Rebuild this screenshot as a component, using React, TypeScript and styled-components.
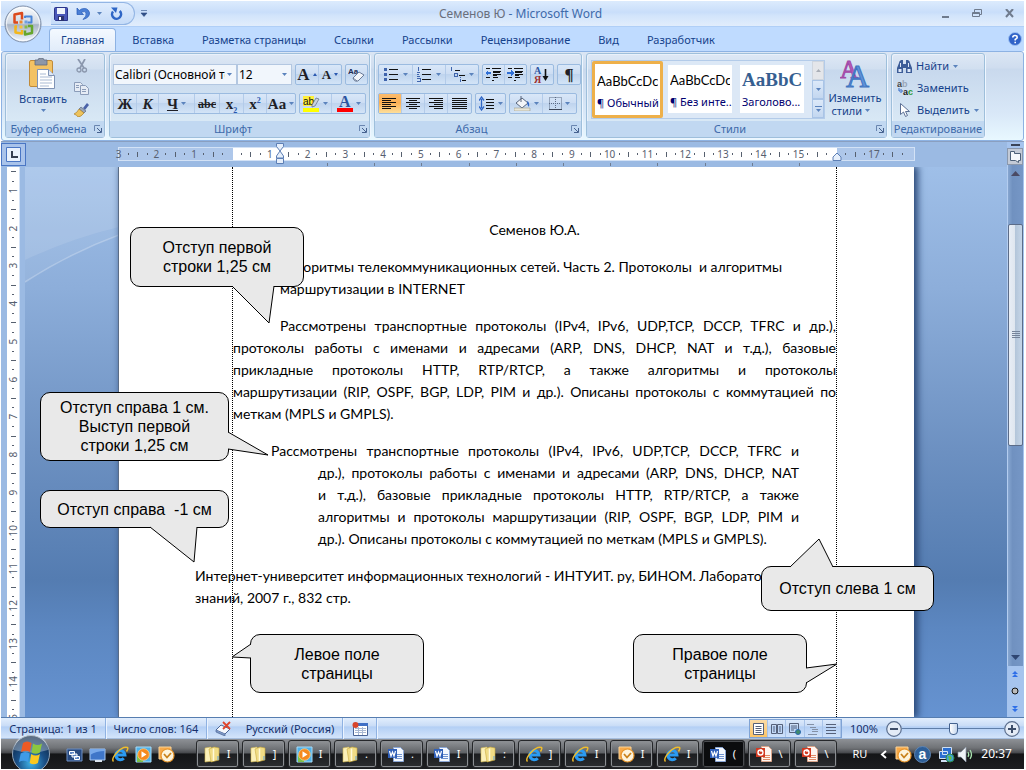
import React from "react";
import styled, { createGlobalStyle, css } from "styled-components";

const UI = '"Noto Sans", "Open Sans", sans-serif';
const INK = "#15428b";

const GlobalStyle = createGlobalStyle`
  * { box-sizing: border-box; }
  body { margin: 0; background: #fff; }
  button, select, input { font: inherit; color: inherit; margin: 0; }
  svg { display: block; }
`;

const Screen = styled.div`
  min-height: 100vh;
  padding: 1px 2px 1px 1px;
  display: flex;
  flex-direction: column;
  overflow: hidden;
  font-family: ${UI};
  font-size: 11px;
  line-height: 16px;
  color: ${INK};
`;

/* ---------- title bar ---------- */
const Head = styled.header`
  position: relative;
  background: #bfdbff;
`;
const TitleBar = styled.div`
  height: 26px;
  display: flex;
  align-items: center;
  padding: 0 4px 0 50px;
  background: linear-gradient(#dcebfd 0, #c9defa 45%, #d3e5fb 60%, #e2edfc 100%);
  border-bottom: 1px solid #b0cff7;
`;
const OrbButton = styled.button`
  position: absolute;
  left: 3px;
  top: 4px;
  width: 38px;
  height: 38px;
  padding: 0;
  border: 0;
  background: none;
  z-index: 2;
`;
const QuickBar = styled.div`
  height: 23px;
  width: 84px;
  padding: 0 11px 0 3px;
  display: flex;
  align-items: center;
  justify-content: space-between;
  border: 1px solid #93b5e4;
  border-left: 0;
  border-radius: 0 12px 12px 0;
  background: linear-gradient(#dfecfd, #c5dbf8);
`;
const Plain = styled.button`
  padding: 0;
  border: 0;
  background: none;
  display: flex;
  align-items: center;
  justify-content: center;
`;
const Title = styled.h1`
  flex: 1;
  margin: 0;
  padding-right: 44px;
  text-align: center;
  font-size: 12px;
  font-weight: 400;
  color: #3e6aaa;
  span { color: #696f7c; }
`;
const WindowKeys = styled.div`
  display: flex;
  gap: 22px;
  width: 88px;
  padding-right: 5px;
  justify-content: flex-end;
`;

/* ---------- tabs ---------- */
const TabBar = styled.nav`
  height: 24px;
  display: flex;
  align-items: flex-end;
  padding-left: 48px;
  background: #bfdbff;
`;
const Tab = styled.button<{ $on?: boolean }>`
  height: 23px;
  padding: 0 14px;
  border: 1px solid transparent;
  border-width: 1px 0 0;
  border-radius: 4px 4px 0 0;
  background: none;
  color: ${INK};
  ${(p) =>
    p.$on &&
    css`
      border-width: 1px 1px 0;
      border-color: #8db2e3;
      padding: 0 11px;
      margin-right: 2px;
      background: linear-gradient(#f4f9ff, #e1ecfa);
    `}
`;
const HelpButton = styled(Plain)`
  margin: 0 2px 5px auto;
`;

/* ---------- ribbon ---------- */
const Ribbon = styled.section`
  height: 90px;
  display: flex;
  gap: 4px;
  padding: 1px 3px 2px;
  border: 1px solid #8db2e3;
  border-radius: 3px;
  background: linear-gradient(#dbe6f4 0, #cfddef 16px, #c9d9ed 17px, #d9e8f8 70%, #e8f8ff 100%);
`;
const Group = styled.section<{ $w: number }>`
  width: ${(p) => p.$w}px;
  flex: none;
  display: flex;
  flex-direction: column;
  border: 1px solid #9ebfdb;
  border-radius: 3px;
  box-shadow: inset 1px 1px 0 #e9f1fb, 1px 1px 0 #eef6ff;
  background: linear-gradient(#dee8f5 0, #d1dff0 15px, #c7d8ed 16px, #d8e8f5 66px);
`;
const GroupBody = styled.div`
  flex: 1;
  display: flex;
`;
const GroupFoot = styled.h2`
  height: 16px;
  margin: 0;
  display: flex;
  align-items: center;
  background: #c1d8f1;
  font-size: 11px;
  font-weight: 400;
  color: #3e6aaa;
  span { flex: 1; text-align: center; white-space: nowrap; }
`;
const Launcher = styled(Plain)`
  width: 13px;
`;
const Rows = styled.div<{ $pad: number }>`
  flex: 1;
  display: flex;
  flex-direction: column;
  gap: 8px;
  padding: 10px 0 0 ${(p) => p.$pad}px;
`;
const ToolRow = styled.div`
  height: 21px;
  display: flex;
  gap: 3px;
`;
const Strip = styled.div`
  display: flex;
  border: 1px solid #9bbbe0;
  border-radius: 2px;
  background: linear-gradient(#d9e7f8 0, #ccddf3 48%, #bfd4ee 50%, #d3e4f7 100%);
`;
const Tool = styled.button<{ $w: number; $on?: boolean }>`
  width: ${(p) => p.$w}px;
  padding: 0;
  border: 0;
  border-right: 1px solid #b3cbe9;
  display: flex;
  align-items: center;
  justify-content: center;
  gap: 3px;
  background: ${(p) => (p.$on ? "linear-gradient(#fbbb6c 0, #fbb054 45%, #fddf9a 100%)" : "none")};
  &:last-child { border-right: 0; }
`;
const Glyph = styled.span<{ $size?: number }>`
  font-family: "Liberation Serif", serif;
  font-size: ${(p) => p.$size || 15}px;
  font-weight: 700;
  line-height: 16px;
  color: #1f1f27;
  sub, sup { font-size: 8px; line-height: 0; color: #2a59b0; }
`;
const Combo = styled.label<{ $w: number }>`
  width: ${(p) => p.$w}px;
  display: flex;
  align-items: center;
  position: relative;
  border: 1px solid #b3c7e1;
  background: #f1f6fc;
  select {
    width: 100%;
    height: 19px;
    padding: 0 11px 0 1px;
    border: 0;
    appearance: none;
    background: none;
    color: #000;
    font-size: 12px;
  }
  svg { position: absolute; right: 4px; top: 8px; }
`;
const Combos = styled.div`
  display: flex;
`;

const PasteButton = styled.button`
  width: 68px;
  padding: 4px 0 0 6px;
  border: 0;
  background: none;
  color: ${INK};
  display: flex;
  flex-direction: column;
  align-items: center;
  gap: 2px;
`;
const ClipTools = styled.div`
  display: flex;
  flex-direction: column;
  justify-content: space-between;
  padding: 5px 0 4px;
`;

const Gallery = styled.div`
  margin: 6px 0 0 4px;
  width: 234px;
  height: 59px;
  display: flex;
  border: 1px solid #b3cbe9;
  background: #dce8f6;
`;
const StyleCard = styled.button<{ $on?: boolean }>`
  width: ${(p) => (p.$on ? 71 : 64)}px;
  margin: ${(p) => (p.$on ? "0 5px 0 0" : "4px 8px 5px 0")};
  padding: ${(p) => (p.$on ? "3px 2px 0" : "1px 2px 0")};
  border: ${(p) => (p.$on ? "3px solid #eeb04a" : "0")};
  border-radius: ${(p) => (p.$on ? 2 : 0)}px;
  background: #fff;
  overflow: hidden;
  display: flex;
  flex-direction: column;
  text-align: left;
  color: #000070;
  white-space: nowrap;
  flex: none;
`;
const Sample = styled.span<{ $heading?: boolean }>`
  height: 28px;
  line-height: 28px;
  width: 100%;
  overflow: hidden;
  color: #000;
  font-family: Lato, sans-serif;
  font-size: 13px;
  ${(p) =>
    p.$heading &&
    css`
      font-family: "Liberation Serif", serif;
      font-size: 19px;
      font-weight: 700;
      color: #365f91;
    `}
`;
const GalleryKeys = styled.div`
  margin-left: auto;
  width: 14px;
  display: flex;
  flex-direction: column;
  button {
    flex: 1;
    border: 1px solid #a9c4e6;
    background: linear-gradient(#dce9f9, #c3d7f0);
  }
  button:first-child { background: #e4e6ea; border-color: #cfd6df; }
`;
const ChangeButton = styled(PasteButton)`
  width: 58px;
  padding: 5px 0 0 2px;
  gap: 3px;
  line-height: 13px;
  span { display: flex; align-items: center; gap: 3px; }
`;
const EditList = styled.div`
  display: flex;
  flex-direction: column;
  padding: 1px 0 0 5px;
  button {
    height: 22px;
    padding: 0;
    border: 0;
    background: none;
    color: ${INK};
    display: flex;
    align-items: center;
    gap: 4px;
  }
`;

/* ---------- work area ---------- */
const Work = styled.main`
  flex: 1;
  min-height: 0;
  display: flex;
  border-top: 1px solid #8a9fc0;
  background: #9bbae3;
`;
const Pane = styled.div`
  flex: 1;
  min-width: 0;
  display: flex;
  flex-direction: column;
`;
const RulerRow = styled.div`
  height: 25px;
  display: flex;
  background: #9bbae3;
`;
const Corner = styled.button`
  width: 25px;
  height: 23px;
  padding: 0;
  margin-top: 1px;
  border: 1px solid #4a76c4;
  background: #a9c3ea;
  display: flex;
  align-items: center;
  justify-content: center;
`;
const RulerHolder = styled.div`
  flex: 1;
  display: flex;
  justify-content: center;
`;
const Ruler = styled.div`
  position: relative;
  width: 797px;
  height: 14px;
  margin-top: 5px;
  border: 1px solid #d3e2f6;
  display: flex;
  background: linear-gradient(90deg, #aec7ea 114px, #fff 114px, #fff 718px, #aec7ea 718px);
`;
const Scale = styled.div`
  width: 793px;
  margin-left: -5px;
  flex: none;
  display: grid;
  grid-template-columns: repeat(84, 1fr);
  align-items: center;
`;
const Mark = styled.span`
  width: 100%;
  min-width: 0;
  display: flex;
  justify-content: center;
  align-items: center;
  font-size: 10px;
  line-height: 12px;
  color: #57606f;
`;
const Tick = styled.i<{ $long?: boolean; $flip?: boolean }>`
  width: ${(p) => (p.$flip ? (p.$long ? 5 : 2) : 1)}px;
  height: ${(p) => (p.$flip ? 1 : p.$long ? 5 : 2)}px;
  background: #57606f;
`;
const Marker = styled.svg<{ $x: number; $y: number }>`
  position: absolute;
  left: ${(p) => p.$x}px;
  top: ${(p) => p.$y}px;
`;
const TabStops = styled.div`
  position: absolute;
  left: 208px;
  top: 15px;
  width: 473px;
  display: flex;
  justify-content: space-between;
  i { width: 1px; height: 3px; background: #6f7d92; }
`;
const DocRow = styled.div`
  flex: 1;
  display: flex;
  min-height: 0;
`;
const SideRuler = styled.div`
  width: 24px;
  overflow: hidden;
  padding: 0 5px 0 6px;
  background: #9bbae3;
  height: 550px;
`;
const SideScale = styled.div`
  height: 557px;
  display: grid;
  grid-template-rows: repeat(59, 1fr);
  background: #fff;
  border-right: 1px solid #d3e2f6;
  justify-items: center;
`;
const SideNumber = styled.span`
  writing-mode: vertical-rl;
  transform: rotate(180deg);
  height: 100%;
  display: flex;
  align-items: center;
  justify-content: center;
  font-size: 10px;
  line-height: 12px;
  color: #57606f;
`;
const SideCell = styled.span`
  min-height: 0;
  display: flex;
  align-items: center;
`;
const Desk = styled.div`
  flex: 1;
  position: relative;
  display: flex;
  justify-content: center;
  min-height: 0;
  overflow: hidden;
  background: linear-gradient(#9fbfe8 0, #8daeda 22%, #6c90c1 52%, #547cb1 75%, #5c87c1 84%, #6693d1 100%);
`;
const Swoosh = styled.svg`
  position: absolute;
  left: 0;
  top: 0;
`;
const Page = styled.article`
  position: relative;
  width: 796px;
  padding: 0 77px 0 114px;
  display: flex;
  background: #fff;
  border-left: 1px solid #5a6c86;
  box-shadow: 3px 0 7px 1px #2c4a78;
`;
const Margins = styled.div`
  flex: 1;
  margin-left: -1px;
  padding-top: 52px;
  border: 1px dotted #000;
  border-width: 0 1px;
  min-width: 0;
  color: #000;
  font-family: Lato, sans-serif;
  font-size: 14px;
  line-height: 22px;
`;
const Para = styled.p<{ $left?: number; $right?: number; $first?: number; $center?: boolean }>`
  margin: 0 ${(p) => p.$right || 0}px 15px ${(p) => p.$left || 0}px;
  text-indent: ${(p) => p.$first || 0}px;
  text-align: ${(p) => (p.$center ? "center" : "left")};
  white-space: nowrap;
`;
const Line = styled.span<{ $loose?: boolean }>`
  display: block;
  text-align: ${(p) => (p.$loose ? "inherit" : "justify")};
  text-align-last: ${(p) => (p.$loose ? "inherit" : "justify")};
  & + & { text-indent: 0; }
`;

const Note = styled.aside<{ $x: number; $y: number; $w: number; $h: number }>`
  position: absolute;
  left: ${(p) => p.$x}px;
  top: ${(p) => p.$y}px;
  width: ${(p) => p.$w}px;
  height: ${(p) => p.$h}px;
  display: flex;
  flex-direction: column;
  align-items: center;
  justify-content: center;
  border: 1px solid #000;
  border-radius: 10px;
  background: #e9e9e9;
  color: #000;
  font-family: "Liberation Sans", Arial, sans-serif;
  font-size: 16px;
  line-height: 19px;
  white-space: pre;
  svg { position: absolute; left: -1px; top: -1px; overflow: visible; }
`;

/* ---------- scroll bar ---------- */
const ScrollCol = styled.div`
  width: 17px;
  display: flex;
  flex-direction: column;
  background: #a6c4ee;
  padding-right: 1px;
`;
const SplitGrip = styled.div`
  height: 2px;
  margin: 2px 3px 2px 4px;
  background: #3a4458;
`;
const RulerToggle = styled(Plain)`
  height: 17px;
  border: 1px solid #8a98ad;
  background: #c3cad6;
`;
const Track = styled.div`
  flex: 1;
  display: flex;
  flex-direction: column;
  align-items: center;
  padding: 6px 0;
  border-left: 1px solid #b4cdf0;
  background: linear-gradient(90deg, #86a6d0, #7091c0 30%, #7697c6);
`;
const Thumb = styled.div`
  margin: 48px 0 auto;
  width: 15px;
  height: 222px;
  border: 1px solid #5c6c88;
  border-radius: 2px;
  display: flex;
  align-items: center;
  justify-content: center;
  background: linear-gradient(90deg, #e8eef6 0, #dfe6ef 45%, #b4c6da 50%, #c6d6e8 100%);
`;
const PageKeys = styled.div`
  height: 51px;
  display: flex;
  flex-direction: column;
  align-items: center;
  justify-content: space-around;
  background: #a6c4ee;
`;

/* ---------- status bar ---------- */
const StatusBar = styled.footer`
  height: 22px;
  display: flex;
  align-items: stretch;
  border-top: 1px solid #567db0;
  background: linear-gradient(#e2eefd 0, #c9dcf6 38%, #b3cff5 42%, #d3e4fa 95%, #7d9cc6 100%);
  color: #15306b;
`;
const StatusItem = styled.button<{ $w: number }>`
  width: ${(p) => p.$w}px;
  padding: 0;
  border: 0;
  border-right: 1px solid #8fb2e2;
  box-shadow: 1px 0 0 #eaf3ff;
  background: none;
  display: flex;
  align-items: center;
  justify-content: center;
  gap: 14px;
  white-space: nowrap;
`;
const ViewKeys = styled.div`
  margin: 1px 0 1px auto;
  width: 93px;
  display: flex;
  border: 1px solid #7fa3d5;
  button { flex: 1; border-right: 1px solid #a9c4e9; }
  button:first-child { background: linear-gradient(#fbdca8, #fcc566); }
`;
const Zoom = styled.label`
  display: flex;
  align-items: center;
  gap: 8px;
  padding: 0 4px 0 8px;
`;
const Slider = styled.input`
  width: 102px;
  height: 18px;
  margin: 0 -8px;
  appearance: none;
  background: linear-gradient(#5f7ea8, #5f7ea8) center / 100% 1px no-repeat;
  &::-webkit-slider-thumb {
    appearance: none;
    width: 9px;
    height: 12px;
    border: 1px solid #44628f;
    border-radius: 1px 1px 4px 4px;
    background: linear-gradient(90deg, #fff, #c7d8ee);
  }
`;

/* ---------- task bar ---------- */
const TaskBar = styled.footer`
  height: 30px;
  display: flex;
  align-items: center;
  position: relative;
  background: linear-gradient(#8e9196 0, #6f7276 30%, #47494d 46%, #141517 50%, #1d1e21 100%);
  color: #fff;
`;
const StartButton = styled(Plain)`
  position: relative;
  width: 42px;
  margin: -5px 14px 0 9px;
`;
const QuickLaunch = styled.div`
  display: flex;
  gap: 6px;
  width: 130px;
`;
const Tasks = styled.div`
  display: flex;
  gap: 3px;
`;
const Task = styled.button<{ $on?: boolean }>`
  width: 43px;
  height: 28px;
  padding: 0 0 0 7px;
  display: flex;
  align-items: center;
  gap: 5px;
  border: 1px solid #26282b;
  border-radius: 3px;
  box-shadow: inset 0 0 0 1px ${(p) => (p.$on ? "#4a4c50" : "#8b8e92")};
  background: ${(p) =>
    p.$on
      ? "#0b0c0e"
      : "linear-gradient(#909397 0, #5f6266 46%, #1c1d20 50%, #2b2d30 100%)"};
  font-size: 11px;
  span { width: 5px; overflow: hidden; white-space: nowrap; }
`;
const Tray = styled.div`
  margin-left: auto;
  padding-right: 12px;
  display: flex;
  align-items: center;
  gap: 7px;
  font-size: 12px;
`;
const TrayIcons = styled.div`
  display: flex;
  align-items: center;
  gap: 2px;
`;
const Lang = styled.span`
  font-size: 11px;
  margin-right: 6px;
`;

/* ---------- drawings ---------- */
const Arrow = ({ up = false, c = "#5b83bd", w = 5 }: { up?: boolean; c?: string; w?: number }) => (
  <svg width={w} height={w > 6 ? 5 : 3} viewBox="0 0 5 3" preserveAspectRatio="none" aria-hidden="true">
    <path d={up ? "M0 3h5L2.500 0z" : "M0 0h5L2.500 3z"} fill={c} />
  </svg>
);

const Orb = () => (
  <svg width="38" height="38" viewBox="0 0 38 38">
    <defs>
      <linearGradient id="orb" x1="0" y1="0" x2="0" y2="1">
        <stop offset="0" stopColor="#fafcfe" />
        <stop offset=".48" stopColor="#cfd8e4" />
        <stop offset=".52" stopColor="#a9b4c5" />
        <stop offset="1" stopColor="#f2f8ff" />
      </linearGradient>
    </defs>
    <circle cx="19" cy="19" r="18" fill="url(#orb)" stroke="#7d8ea8" />
    <circle cx="19" cy="19" r="16.500" fill="none" stroke="#fff" strokeOpacity=".7" />
    <g fill="none" strokeWidth="2.500" strokeLinejoin="round">
      <path d="M14 17.500h-3.500v-8l7.500-1.500v6.500" stroke="#dc4a1c" />
      <path d="M21 13v-1.500h6.500v6h-4" stroke="#4a86d8" strokeWidth="2" />
      <path d="M13 21.500h-1.500v6l6.500 1v-3.500" stroke="#f3b71c" />
      <path d="M24 21h4v7l-7 1.500v-4" stroke="#66a62c" />
    </g>
    <path d="M15.500 15.500h3v3h-3z" fill="#f08a2c" />
    <path d="M20.500 15.500h3v3h-3z" fill="#6f9fe0" />
    <path d="M15.500 20.500h3v3h-3z" fill="#f5c23a" />
    <path d="M20.500 20.500h3v3h-3z" fill="#86ba4c" />
  </svg>
);

const Floppy = () => (
  <svg width="14" height="14" viewBox="0 0 14 14">
    <path d="M.5 1.500q0-1 1-1h11q1 0 1 1v12h-12l-1-1z" fill="#4856b8" stroke="#2a3489" />
    <path d="M3 1h8v6H3z" fill="#eef3fb" />
    <path d="M4 9h6v5H4z" fill="#2b3270" />
    <path d="M5 10h2v3H5z" fill="#fff" />
  </svg>
);
const Undo = () => (
  <svg width="14" height="13" viewBox="0 0 14 13">
    <path d="M1 1v6.500h6.500L5.300 5.500q3.700-2 4.700.5 1 3-3 6.500 7-2 6.500-7Q11.500 0 5.500 2L3.300 3.500z" fill="#4a7fd6" stroke="#2458b4" strokeWidth=".7" />
  </svg>
);
const Redo = () => (
  <svg width="13" height="13" viewBox="0 0 13 13">
    <path d="M9.700 4A4.500 4.500 0 1 1 3 4.500" fill="none" stroke="#2f66c6" strokeWidth="2.500" />
    <path d="M1 .5h6.500L6 6z" fill="#2f66c6" />
  </svg>
);
const Help = () => (
  <svg width="14" height="14" viewBox="0 0 14 14">
    <circle cx="7" cy="7" r="6.500" fill="#2f62c8" stroke="#9cc0f2" />
    <path d="M4.800 5.500q0-2 2.200-2t2.200 1.800Q9.200 6.500 7.200 7.500v1M7.200 9.800v1.400" fill="none" stroke="#fff" strokeWidth="1.600" />
  </svg>
);
const Paste = () => (
  <svg width="28" height="31" viewBox="0 0 28 31">
    <rect x=".5" y="2.500" width="23" height="26" rx="1.500" fill="#f3c263" stroke="#c08a3a" />
    <path d="M6 2h3q0-2 3-2t3 2h3v5H6z" fill="#8d97a8" stroke="#5f6a7d" strokeWidth=".8" />
    <path d="M8.500 11.500h11l6 6v13h-17z" fill="#fff" stroke="#7f93b5" />
    <path d="M19.500 11.500v6h6" fill="#dde7f5" stroke="#7f93b5" />
    <path d="M11 16h6M11 19h12M11 22h12M11 25h12M11 28h9" stroke="#a9bad3" />
  </svg>
);
const Scissors = () => (
  <svg width="14" height="14" viewBox="0 0 14 14" fill="none" stroke="#8b97ad">
    <path d="M3 0l6 9M10 0L5 9" strokeWidth="1.700" />
    <circle cx="4" cy="11" r="2" strokeWidth="1.300" />
    <circle cx="9.500" cy="11" r="2" strokeWidth="1.300" />
  </svg>
);
const Copy = () => (
  <svg width="15" height="13" viewBox="0 0 15 13" fill="#e6ecf5" stroke="#8b9cb8">
    <path d="M.5.5h6l2 2v7h-8z" />
    <path d="M6.500 3.500h5l3 3v6h-8z" />
    <path d="M2 3.500h3M2 5.500h3M8 7.500h4M8 9.500h4" />
  </svg>
);
const Brush = () => (
  <svg width="15" height="14" viewBox="0 0 15 14">
    <path d="M9 5l4-5 2 2-4 5z" fill="#4a62a8" />
    <path d="M7 4l5 4-2 2-5-4z" fill="#9aa6ba" stroke="#4e5a72" strokeWidth=".6" />
    <path d="M5 6l5 4q-3 4-6 4-1-2-4-3 3-1 5-5z" fill="#edc35c" stroke="#a3741c" strokeWidth=".6" />
  </svg>
);
const LaunchIcon = () => (
  <svg width="8" height="8" viewBox="0 0 8 8" fill="none" stroke="#6a86b0">
    <path d="M.5 6V.5H6" />
    <path d="M3 3l4 4M7.500 3v4.500H3" stroke="#46628f" />
  </svg>
);
const Eraser = () => (
  <svg width="17" height="15" viewBox="0 0 17 15">
    <text x="0" y="7" fontFamily="Liberation Sans" fontSize="8" fontWeight="700" fill="#1d2c55">Aa</text>
    <path d="M5 11l6-6 5 3-6 6q-4 1-5-3z" fill="#f2f5fa" stroke="#6a7b98" />
    <path d="M5 11l4 3" stroke="#6a7b98" />
  </svg>
);
const Highlighter = () => (
  <svg width="17" height="17" viewBox="0 0 17 17">
    <path d="M0 1h11v10H0z" fill="#ffef3a" />
    <text x="0" y="10" fontFamily="Liberation Sans" fontSize="10" fill="#111">ab</text>
    <path d="M9 10l4-7 3 1-4 7-3 1z" fill="#c9d2de" stroke="#5d6b80" strokeWidth=".7" />
    <path d="M0 13h16v4H0z" fill="#ffff00" />
  </svg>
);
const FontColor = () => (
  <svg width="16" height="17" viewBox="0 0 16 17">
    <text x="2" y="12" fontFamily="Liberation Serif" fontSize="16" fontWeight="700" fill="#2c55a0">A</text>
    <path d="M0 13h16v4H0z" fill="#f00" />
  </svg>
);
const ListIcon = ({ kind }: { kind: "dot" | "num" | "multi" }) => (
  <svg width="16" height="15" viewBox="0 0 16 15" shapeRendering="crispEdges">
    {kind === "multi" ? (
      <path d="M5 3.500h5M9 8.500h6M12 13.500h4" stroke="#111" />
    ) : (
      <path d="M5 2.500h9M5 7.500h9M5 12.500h9" stroke="#111" />
    )}
    {kind === "dot" && <path d="M0 1h3v3H0zM0 6h3v3H0zM0 11h3v3H0z" fill="#3f64ad" />}
    {kind === "num" && (
      <path d="M1.500 0v4M0 5.500h3M2 7.500H0M0 9.500h3M0 11.500h3v3H0" stroke="#3f64ad" fill="none" />
    )}
    {kind === "multi" && <path d="M1.500 0v4M4.500 6.500h3v3h-3zM10.500 10v1M10.500 12v3" stroke="#3f64ad" fill="none" />}
  </svg>
);
const Indent = ({ out = false }: { out?: boolean }) => (
  <svg width="17" height="15" viewBox="0 0 17 15" shapeRendering="crispEdges">
    <path d="M7 1.500h9M8 4.500h8M8 7.500h8M8 10.500h5M1 1.500h4M1 10.500h4M7 13.500h2" stroke="#111" />
    <path d="M8 5.500h7M8 8.500h4" stroke="#111" />
    <path d={out ? "M0 6l3-3v2h3v2H3v2z" : "M7 6L4 3v2H0v2h4v2z"} fill="#2f6fd6" />
  </svg>
);
const Sort = () => (
  <svg width="16" height="18" viewBox="0 0 16 18">
    <text x="0" y="8" fontFamily="Liberation Serif" fontSize="10" fontWeight="700" fill="#2c55a0">А</text>
    <text x="0" y="17" fontFamily="Liberation Serif" fontSize="10" fontWeight="700" fill="#a03030">Я</text>
    <path d="M11.500 3v9" stroke="#111" strokeWidth="1.600" />
    <path d="M8.500 10h6l-3 5z" fill="#111" />
  </svg>
);
const AlignIcon = ({ rows }: { rows: [number, number][] }) => (
  <svg width="16" height="12" viewBox="0 0 16 12" shapeRendering="crispEdges">
    {rows.map(([x, w], i) => (
      <path key={i} d={`M${x} ${i * 2 + 0.5}h${w}`} stroke="#111" />
    ))}
  </svg>
);
const Spacing = () => (
  <svg width="16" height="15" viewBox="0 0 16 15">
    <path d="M2.500 3v9M0 4.500L2.500 1 5 4.500M0 10.500L2.500 14 5 10.500" stroke="#2f66c6" strokeWidth="1.300" fill="none" />
    <path d="M7 3.500h8M7 6.500h8M7 9.500h8M7 12.500h8" stroke="#111" />
  </svg>
);
const Bucket = () => (
  <svg width="17" height="15" viewBox="0 0 17 15">
    <path d="M2 7l6-5 6 5-6 5z" fill="#f3f5f8" stroke="#58657c" />
    <path d="M13 5q3 1 2 6-2-2-2-6z" fill="#2f66c6" />
    <path d="M7 0v6" stroke="#58657c" />
    <path d="M0 12h16v3H0z" fill="#e8e6d8" stroke="#9a9a8c" strokeWidth=".6" />
  </svg>
);
const Borders = () => (
  <svg width="13" height="13" viewBox="0 0 13 13">
    <path d="M.5.5h12v12H.5zM6.500 0v12M0 6.500h12" fill="none" stroke="#5b6a84" strokeDasharray="1 1" />
    <path d="M0 12.500h13" stroke="#3c4658" />
  </svg>
);
const ChangeStyles = () => (
  <svg width="30" height="29" viewBox="0 0 30 29">
    <text x="0" y="19" fontFamily="Liberation Serif" fontSize="25" fill="#b55bb8" stroke="#a24aa8">A</text>
    <text x="6" y="28" fontFamily="Liberation Serif" fontSize="32" fill="#5f93da" stroke="#3f74c0">A</text>
  </svg>
);
const Binoculars = () => (
  <svg width="15" height="13" viewBox="0 0 15 13">
    <path d="M2 3q0-2 2-3h2v4h3V0h2q2 1 2 3l2 5v5H9V8H6v5H0V8z" fill="#3d5d98" />
    <path d="M1.500 9h3v3h-3zM10.500 9h3v3h-3zM3 3h1v4H3zM11 3h1v4h-1z" fill="#dfe9f8" />
  </svg>
);
const Replace = () => (
  <svg width="16" height="16" viewBox="0 0 16 16">
    <text x="0" y="7" fontFamily="Liberation Sans" fontSize="9" fontWeight="700" fill="#444">a<tspan fill="#9aa6b8">b</tspan></text>
    <text x="6" y="15" fontFamily="Liberation Sans" fontSize="9" fontWeight="700" fill="#222">a<tspan fill="#2f9a3c">c</tspan></text>
    <path d="M2 8v3h2.500M3.500 9l2 2-2 2" stroke="#2f66c6" fill="none" />
  </svg>
);
const Pointer = () => (
  <svg width="16" height="14" viewBox="0 0 16 14">
    <path d="M3.500.5v11l3-2.500 2 4.500 2-1-2-4h4z" fill="#fff" stroke="#5d7095" />
  </svg>
);

const Folder = () => (
  <svg width="17" height="17" viewBox="0 0 17 17">
    <path d="M1 2l6-1 2 14-8 1z" fill="#fbf0b8" stroke="#d3b850" strokeWidth=".6" />
    <path d="M5 3l5-2 5 1v12l-8 2z" fill="#f0dc86" stroke="#c9a93c" strokeWidth=".6" />
    <path d="M9.500 2.500V15" stroke="#fff9d8" strokeWidth="1.500" />
    <path d="M14 10v4" stroke="#5fa0d8" />
  </svg>
);
const Media = () => (
  <svg width="17" height="17" viewBox="0 0 17 17">
    <path d="M1 1h15v15H1z" fill="#4fb1ea" stroke="#a9dcf8" />
    <path d="M2 9h6v7H2z" fill="#7cc04a" />
    <circle cx="8.500" cy="8.500" r="5.800" fill="#f58a1e" stroke="#fbd08c" strokeWidth=".8" />
    <path d="M6.500 5.200v6.600l5-3.300z" fill="#fff" />
  </svg>
);
const WordIcon = () => (
  <svg width="17" height="17" viewBox="0 0 17 17">
    <path d="M5.500 1.500h7l3 3v11h-10z" fill="#f4f8fe" stroke="#8aa6d6" />
    <path d="M7 8.500h7M7 10.500h7M7 12.500h7" stroke="#6f92cf" />
    <path d="M0 3h9v9H0z" fill="#2f5fb8" />
    <path d="M1.500 5l1.500 5 1.500-4L6 10l1.500-5" fill="none" stroke="#fff" strokeWidth="1.200" />
  </svg>
);
const PptIcon = () => (
  <svg width="17" height="17" viewBox="0 0 17 17">
    <path d="M5.500.5h7l3 3v12h-10z" fill="#fff5ef" stroke="#dba58a" />
    <path d="M7 9.500h7M7 11.500h7M7 13.500h7" stroke="#e08a66" />
    <path d="M0 2h9v9H0z" fill="#d23a22" />
    <circle cx="4.500" cy="6.500" r="2.500" fill="none" stroke="#fff" strokeWidth="1.400" />
    <path d="M5 6V3" stroke="#fff" strokeWidth="1.200" />
  </svg>
);
const Explorer = () => (
  <svg width="17" height="17" viewBox="0 0 17 17">
    <path d="M3.500 9h9.500a4.600 4.600 0 1 0-1.200 3.300" fill="none" stroke="#2b9bf2" strokeWidth="3" />
    <path d="M1.500 15.500Q-1 13 5 6.500T15.500 1.500q1 1-1 4" fill="none" stroke="#f0bd2c" strokeWidth="1.500" />
  </svg>
);
const Outlook = () => (
  <svg width="17" height="17" viewBox="0 0 17 17">
    <path d="M1 1h12v12H1z" fill="#f6a94a" stroke="#fbd59a" />
    <circle cx="9.500" cy="9.500" r="6.500" fill="#fdf4dc" stroke="#e8962c" strokeWidth="1.200" />
    <path d="M6 8l3 3.500L13 7" fill="none" stroke="#c9821c" strokeWidth="1.800" />
  </svg>
);
const Switcher = () => (
  <svg width="17" height="17" viewBox="0 0 17 17">
    <path d="M1 3h15v12H1z" fill="#27497f" stroke="#6e90c4" />
    <path d="M3.500 5.500h5v3h-5zM6 8h5v3H6zM8.500 10.500h5v3h-5z" fill="#5f86c4" stroke="#fff" />
  </svg>
);
const Desktop = () => (
  <svg width="17" height="17" viewBox="0 0 17 17">
    <path d="M1 3h15v11H1z" fill="#3f76c9" stroke="#a9c9f2" />
    <path d="M1 9q6-4 15-4V3H1z" fill="#78a9ea" />
    <path d="M6 14h7v2H6z" fill="#dbe4ef" />
  </svg>
);
const Start = () => (
  <svg width="40" height="34" viewBox="0 0 40 34">
    <defs>
      <radialGradient id="start" cx=".5" cy=".75" r=".75">
        <stop offset="0" stopColor="#3fb3e8" />
        <stop offset=".5" stopColor="#1a4f86" />
        <stop offset="1" stopColor="#0c2340" />
      </radialGradient>
    </defs>
    <circle cx="20" cy="19" r="18.500" fill="url(#start)" stroke="#93a5b8" />
    <path d="M3 15a17 17 0 0 1 34 0q-16 5-34 0z" fill="#fff" opacity=".33" />
    <path d="M12 8q4-3 8.500 0L19 17q-4-2.500-9 0z" fill="#ee5a24" />
    <path d="M22 8.500q4.500 3 9 0l-2 9q-4.500 2.500-8.500 0z" fill="#8cc63f" />
    <path d="M9.700 18.500q4.500-3 9 0L17 27q-4.500-2.500-9 0z" fill="#3f9be8" />
    <path d="M20.200 19q4.500 3 8.700 0l-2 9q-4.200 2.500-8.200 0z" fill="#fcc81e" />
  </svg>
);
const Avatar = () => (
  <svg width="17" height="17" viewBox="0 0 17 17">
    <circle cx="8.500" cy="8.500" r="8" fill="#2e5f98" stroke="#5f86b4" />
    <text x="4.500" y="13" fontFamily="Liberation Sans" fontSize="14" fontWeight="700" fill="#fff">a</text>
  </svg>
);
const Network = () => (
  <svg width="17" height="17" viewBox="0 0 17 17">
    <path d="M4.500 1.500h9v7h-9zM1.500 5.500h8v7h-8z" fill="#2c6fd0" stroke="#cfe0f4" />
    <path d="M3 14h6v2H3z" fill="#cfe0f4" />
    <circle cx="12" cy="12" r="4" fill="#3f9fd8" stroke="#2f8a4c" />
    <path d="M10 10q3-1 4 2-1 2-3 3 0-3-1-5z" fill="#62c04c" />
  </svg>
);
const Speaker = () => (
  <svg width="17" height="17" viewBox="0 0 17 17">
    <path d="M1 6h3l5-5v15l-5-5H1z" fill="#f0f3f7" stroke="#8c98a8" strokeWidth=".7" />
    <path d="M11 6q1.500 2.500 0 5M13 4q3 4.500 0 9" fill="none" stroke="#a9e6b0" strokeWidth="1.200" />
  </svg>
);

const ProofIcon = () => (
  <svg width="17" height="15" viewBox="0 0 17 15">
    <path d="M1 9l5-5 9 4-5 5z" fill="#f5f8fd" stroke="#4b6596" />
    <path d="M1 9v2l9 4v-2" fill="#7d97c4" stroke="#4b6596" strokeWidth=".7" />
    <path d="M8 1l7 7M15 1L8 8" stroke="#e0452c" strokeWidth="1.800" />
  </svg>
);
const MacroIcon = () => (
  <svg width="16" height="14" viewBox="0 0 16 14">
    <path d="M1.500 1.500h14v12h-14z" fill="#fff" stroke="#4b6596" />
    <path d="M1 1h15v3H1z" fill="#3f6fc6" />
    <path d="M3 6.500h11M3 8.500h11M3 10.500h11M6.500 5v8M10.500 5v8" stroke="#a9b9d3" />
    <circle cx="3.500" cy="3" r="3" fill="#d8452c" />
  </svg>
);
const ViewIcon = ({ kind }: { kind: number }) => (
  <svg width="12" height="12" viewBox="0 0 12 12" fill="none" stroke="#55617a">
    {kind === 0 && <path d="M.5.5h10v11h-10zM2.500 3.500h6M2.500 5.500h6M2.500 7.500h6M2.500 9.500h6" fill="#fff" />}
    {kind === 1 && <path d="M.5 1.500h5v9h-5zM6.500 1.500h5v9h-5zM2 4h2M2 6h2M2 8h2M8 4h2M8 6h2M8 8h2" />}
    {kind === 2 && <path d="M.5.5h9v9h-9zM2 3h6M2 5h6M2 7h3" />}
    {kind === 2 && <circle cx="9" cy="9" r="2.500" fill="#3f8a6c" stroke="#2c6ab0" />}
    {kind === 3 && <path d="M0 1.500h7M3 4.500h6M5 6.500h6M5 8.500h6M1 11.500h9" stroke="#8390a6" />}
    {kind === 4 && <path d="M1 1.500h10M1 4.500h10M1 7.500h10M1 10.500h10" />}
  </svg>
);
const ZoomKey = ({ plus = false }: { plus?: boolean }) => (
  <svg width="16" height="16" viewBox="0 0 16 16">
    <circle cx="8" cy="8" r="7.300" fill="#e3ebf6" stroke="#5c6f8e" strokeWidth="1.200" />
    <path d={plus ? "M4 8h8M8 4v8" : "M4 8h8"} stroke="#3d4d69" strokeWidth="2" />
  </svg>
);

/* ---------- data ---------- */
const TABS = ["Вставка", "Разметка страницы", "Ссылки", "Рассылки", "Рецензирование", "Вид", "Разработчик"];

const NOTES = [
  { x: 12, y: 60, w: 174, h: 60, lines: ["Отступ первой", "строки 1,25 см"], tail: "M102 59L139 96L144 59" },
  { x: -78, y: 225, w: 189, h: 69, lines: ["Отступ справа 1 см.", "Выступ первой", "строки 1,25 см"], tail: "M188 40L228 63L188 57" },
  { x: -78, y: 323, w: 189, h: 38, lines: ["Отступ справа  -1 см"], tail: "M110 37L154 72L157 37" },
  { x: 643, y: 399, w: 173, h: 45, lines: ["Отступ слева 1 см"], tail: "M29 1L58 -27L72 1" },
  { x: 132, y: 467, w: 174, h: 59, lines: ["Левое поле", "страницы"], tail: "M1 10L-18 23L1 24" },
  { x: 515, y: 467, w: 174, h: 59, lines: ["Правое поле", "страницы"], tail: "M173 34L204 30L173 49" },
];

const TASKS: [React.FC, string][] = [
  [Folder, "I"], [Folder, "]"], [Media, "I"], [Folder, "."], [WordIcon, "."], [WordIcon, "I"], [Folder, ":"],
  [Explorer, "]"], [Explorer, "I"], [Outlook, "I"], [Explorer, "I"], [WordIcon, "("], [PptIcon, "\\"], [PptIcon, "\\"],
];

const FOUR: [number, number][][] = [
  [[0, 14], [0, 9], [0, 14], [0, 9], [0, 14], [0, 9]],
  [[1, 14], [4, 8], [1, 14], [4, 8], [1, 14], [4, 8]],
  [[1, 14], [6, 9], [1, 14], [6, 9], [1, 14], [6, 9]],
  [[0, 15], [0, 15], [0, 15], [0, 15], [0, 15], [0, 15]],
];

const rulerMark = (q: number) => {
  if (q === 0 || q === 64) return null;
  if (q % 4 === 0) return Math.abs(q / 4);
  return <Tick $long={q % 2 === 0} />;
};

const Launch = ({ label }: { label: string }) => (
  <Launcher aria-label={label}><LaunchIcon /></Launcher>
);

export default function App() {
  return (
    <Screen>
      <GlobalStyle />
      <Head>
        <OrbButton aria-label="Office"><Orb /></OrbButton>
        <TitleBar>
          <QuickBar>
            <Plain aria-label="Сохранить"><Floppy /></Plain>
            <Plain aria-label="Отменить"><Undo /></Plain>
            <Plain aria-label="Список отмены"><Arrow /></Plain>
            <Plain aria-label="Повторить"><Redo /></Plain>
          </QuickBar>
          <Plain aria-label="Настройка панели">
            <svg width="18" height="7" viewBox="0 0 18 7"><path d="M6 .5h6M6 3h6l-3 3.500z" fill="#2f4f86" stroke="#2f4f86" strokeWidth=".6" /></svg>
          </Plain>
          <Title><span>Семенов Ю</span> - Microsoft Word</Title>
          <WindowKeys>
            <Plain aria-label="Свернуть"><svg width="8" height="9"><path d="M0 7h7v2H0z" fill="#6f7b8d" /></svg></Plain>
            <Plain aria-label="Восстановить">
              <svg width="11" height="9" fill="none" stroke="#6f7b8d"><path d="M2.500 3V.5h7v5H8M.5 3.500h7v4h-7zM1 4.500h6" /></svg>
            </Plain>
            <Plain aria-label="Закрыть"><svg width="10" height="9"><path d="M1 0l7 8M8 0L1 8" stroke="#6f7b8d" strokeWidth="2" /></svg></Plain>
          </WindowKeys>
        </TitleBar>
        <TabBar>
          <Tab $on>Главная</Tab>
          {TABS.map((t) => <Tab key={t}>{t}</Tab>)}
          <HelpButton aria-label="Справка"><Help /></HelpButton>
        </TabBar>
      </Head>

      <Ribbon>
        <Group $w={100}>
          <GroupBody>
            <PasteButton><Paste />Вставить<Arrow /></PasteButton>
            <ClipTools>
              <Plain aria-label="Вырезать"><Scissors /></Plain>
              <Plain aria-label="Копировать"><Copy /></Plain>
              <Plain aria-label="Формат по образцу"><Brush /></Plain>
            </ClipTools>
          </GroupBody>
          <GroupFoot><span>Буфер обмена</span><Launch label="Буфер обмена" /></GroupFoot>
        </Group>

        <Group $w={261}>
          <GroupBody>
            <Rows $pad={3}>
              <ToolRow>
                <Combos>
                  <Combo $w={124}>
                    <select aria-label="Шрифт"><option>Calibri (Основной текст)</option></select><Arrow />
                  </Combo>
                  <Combo $w={55}>
                    <select aria-label="Размер"><option>12</option></select><Arrow />
                  </Combo>
                </Combos>
                <Strip>
                  <Tool $w={23} aria-label="Увеличить размер"><Glyph $size={17}>A</Glyph><Arrow up c="#2a59b0" w={4} /></Tool>
                  <Tool $w={22} aria-label="Уменьшить размер"><Glyph $size={13}>A</Glyph><Arrow c="#2a59b0" w={4} /></Tool>
                </Strip>
                <Strip><Tool $w={21} aria-label="Очистить формат"><Eraser /></Tool></Strip>
              </ToolRow>
              <ToolRow>
                <Strip>
                  <Tool $w={23}><Glyph>Ж</Glyph></Tool>
                  <Tool $w={22}><Glyph><i>К</i></Glyph></Tool>
                  <Tool $w={36}><Glyph><u>Ч</u></Glyph><Arrow /></Tool>
                  <Tool $w={25}><Glyph $size={12}><s>abc</s></Glyph></Tool>
                  <Tool $w={24}><Glyph>x<sub>2</sub></Glyph></Tool>
                  <Tool $w={23}><Glyph>x<sup>2</sup></Glyph></Tool>
                  <Tool $w={28}><Glyph>Aa</Glyph><Arrow /></Tool>
                </Strip>
                <Strip>
                  <Tool $w={32} aria-label="Цвет выделения"><Highlighter /><Arrow /></Tool>
                  <Tool $w={33} aria-label="Цвет текста"><FontColor /><Arrow /></Tool>
                </Strip>
              </ToolRow>
            </Rows>
          </GroupBody>
          <GroupFoot><span>Шрифт</span><Launch label="Шрифт" /></GroupFoot>
        </Group>

        <Group $w={208}>
          <GroupBody>
            <Rows $pad={3}>
              <ToolRow>
                <Strip>
                  <Tool $w={34} aria-label="Маркеры"><ListIcon kind="dot" /><Arrow /></Tool>
                  <Tool $w={33} aria-label="Нумерация"><ListIcon kind="num" /><Arrow /></Tool>
                  <Tool $w={32} aria-label="Многоуровневый список"><ListIcon kind="multi" /><Arrow /></Tool>
                </Strip>
                <Strip>
                  <Tool $w={22} aria-label="Уменьшить отступ"><Indent out /></Tool>
                  <Tool $w={21} aria-label="Увеличить отступ"><Indent /></Tool>
                </Strip>
                <Strip><Tool $w={22} aria-label="Сортировка"><Sort /></Tool></Strip>
                <Strip><Tool $w={22} aria-label="Знаки абзаца"><Glyph $size={17}>¶</Glyph></Tool></Strip>
              </ToolRow>
              <ToolRow>
                <Strip>
                  {FOUR.map((rows, i) => (
                    <Tool key={i} $w={23} $on={i === 0} aria-label={`Выравнивание ${i + 1}`}><AlignIcon rows={rows} /></Tool>
                  ))}
                </Strip>
                <Strip><Tool $w={29} aria-label="Интервал"><Spacing /><Arrow /></Tool></Strip>
                <Strip>
                  <Tool $w={33} aria-label="Заливка"><Bucket /><Arrow /></Tool>
                  <Tool $w={33} aria-label="Границы"><Borders /><Arrow /></Tool>
                </Strip>
              </ToolRow>
            </Rows>
          </GroupBody>
          <GroupFoot><span>Абзац</span><Launch label="Абзац" /></GroupFoot>
        </Group>

        <Group $w={301}>
          <GroupBody>
            <Gallery>
              <StyleCard $on><Sample>AaBbCcDc</Sample>¶ Обычный</StyleCard>
              <StyleCard><Sample>AaBbCcDc</Sample>¶ Без инте...</StyleCard>
              <StyleCard><Sample $heading>AaBbCc</Sample>Заголово...</StyleCard>
              <GalleryKeys>
                <Plain aria-label="Вверх"><Arrow up c="#a9aeb6" /></Plain>
                <Plain aria-label="Вниз"><Arrow /></Plain>
                <Plain aria-label="Все стили">
                  <svg width="7" height="6"><path d="M0 .5h7" stroke="#5b83bd" /><path d="M1 3h5L3.500 6z" fill="#5b83bd" /></svg>
                </Plain>
              </GalleryKeys>
            </Gallery>
            <ChangeButton><ChangeStyles /><div>Изменить<span>&nbsp;стили <Arrow /></span></div></ChangeButton>
          </GroupBody>
          <GroupFoot><span>Стили</span><Launch label="Стили" /></GroupFoot>
        </Group>

        <Group $w={94}>
          <GroupBody>
            <EditList>
              <button><Binoculars />Найти <Arrow /></button>
              <button><Replace />Заменить</button>
              <button><Pointer />Выделить <Arrow /></button>
            </EditList>
          </GroupBody>
          <GroupFoot><span>Редактирование</span></GroupFoot>
        </Group>
      </Ribbon>

      <Work>
        <Pane>
          <RulerRow>
            <Corner aria-label="Тип табуляции">
              <svg width="15" height="15"><path d="M.5.5h14v14H.5z" fill="#e9f1fc" stroke="#4a76c4" /><path d="M6 4v6h6" fill="none" stroke="#333d50" strokeWidth="2" /></svg>
            </Corner>
            <RulerHolder>
              <Ruler>
                <Scale>
                  {Array.from({ length: 84 }, (_, i) => <Mark key={i}>{rulerMark(i - 12)}</Mark>)}
                </Scale>
                <TabStops>{Array.from({ length: 11 }, (_, i) => <i key={i} />)}</TabStops>
                <Marker $x={156} $y={-5} width="11" height="22" fill="#e6effb" stroke="#5d7fb5">
                  <path d="M1.500 .5h7v3L5 8 1.500 3.500zM5 8l3.500 5v2h-7v-2zM1.500 15.500h7v5h-7z" />
                </Marker>
                <Marker $x={713} $y={4} width="11" height="10" fill="#e6effb" stroke="#5d7fb5">
                  <path d="M1 8.500V5L5 1l4 4v3.500z" />
                </Marker>
              </Ruler>
            </RulerHolder>
          </RulerRow>
          <DocRow>
            <SideRuler>
              <SideScale>
                {Array.from({ length: 59 }, (_, i) => {
                  const q = i + 2;
                  return (
                    <SideCell key={i}>
                      {q % 4 === 0 ? <SideNumber>{q / 4}</SideNumber> : <Tick $flip $long={q % 2 === 0} />}
                    </SideCell>
                  );
                })}
              </SideScale>
            </SideRuler>
            <Desk>
              <Swoosh width="94" height="120" viewBox="0 0 94 120">
                <path d="M0 0h94v60Q45 72 0 93z" fill="#fff" opacity=".16" />
                <path d="M0 93Q45 72 94 60v8Q45 86 0 115z" fill="#fff" opacity=".07" />
                <path d="M0 115Q45 86 94 68" fill="none" stroke="#fff" strokeOpacity=".25" strokeWidth="1.500" />
              </Swoosh>
              <Page>
                <Margins>
                  <Para $center>Семенов Ю.А.</Para>
                  <Para $left={47}>
                    <Line $loose>Алгоритмы телекоммуникационных сетей. Часть 2. Протоколы&nbsp; и алгоритмы</Line>
                    <Line $loose>маршрутизации в INTERNET</Line>
                  </Para>
                  <Para $first={47}>
                    <Line>Рассмотрены транспортные протоколы (IPv4, IPv6, UDP,TCP, DCCP, TFRC и др.),</Line>
                    <Line>протоколы работы с именами и адресами (ARP, DNS, DHCP, NAT и т.д.), базовые</Line>
                    <Line>прикладные протоколы HTTP, RTP/RTCP, а также алгоритмы и протоколы</Line>
                    <Line>маршрутизации (RIP, OSPF, BGP, LDP, PIM и др.). Описаны протоколы с коммутацией по</Line>
                    <Line $loose>меткам (MPLS и GMPLS).</Line>
                  </Para>
                  <Para $left={85} $right={37} $first={-47}>
                    <Line>Рассмотрены транспортные протоколы (IPv4, IPv6, UDP,TCP, DCCP, TFRC и</Line>
                    <Line>др.), протоколы работы с именами и адресами (ARP, DNS, DHCP, NAT</Line>
                    <Line>и т.д.), базовые прикладные протоколы HTTP, RTP/RTCP, а также</Line>
                    <Line>алгоритмы и протоколы маршрутизации (RIP, OSPF, BGP, LDP, PIM и</Line>
                    <Line $loose>др.). Описаны протоколы с коммутацией по меткам (MPLS и GMPLS).</Line>
                  </Para>
                  <Para $left={-38}>
                    <Line $loose>Интернет-университет информационных технологий - ИНТУИТ. ру, БИНОМ. Лаборатория</Line>
                    <Line $loose>знаний, 2007 г., 832 стр.</Line>
                  </Para>
                </Margins>
                {NOTES.map((n, i) => (
                  <Note key={i} $x={n.x - 1} $y={n.y} $w={n.w} $h={n.h}>
                    <svg width="1" height="1"><path d={n.tail} fill="#e9e9e9" stroke="#000" /></svg>
                    {n.lines.map((l) => <span key={l}>{l}</span>)}
                  </Note>
                ))}
              </Page>
            </Desk>
          </DocRow>
        </Pane>
        <ScrollCol>
          <SplitGrip />
          <RulerToggle aria-label="Линейка">
            <svg width="13" height="13" fill="#f4f7fb" stroke="#4d6078"><path d="M1.500 1.500h4v2h6v7h-2v2l-3-2h-5z" /></svg>
          </RulerToggle>
          <Track>
            <Arrow up c="#4a4a64" w={9} />
            <Thumb><svg width="8" height="8"><path d="M0 .5h8M0 2.500h8M0 4.500h8M0 6.500h8" stroke="#76849a" /></svg></Thumb>
            <Arrow c="#2f4672" w={9} />
          </Track>
          <PageKeys>
            <Plain aria-label="Предыдущая"><svg width="6" height="7" fill="#2f6fe8"><path d="M0 3h6L3 0zM0 6h6L3 3z" /></svg></Plain>
            <Plain aria-label="Выбор объекта"><svg width="8" height="8"><circle cx="4" cy="4" r="3" fill="#bbb" stroke="#111" /></svg></Plain>
            <Plain aria-label="Следующая"><svg width="6" height="7" fill="#2f6fe8"><path d="M0 1h6L3 4zM0 4h6L3 7z" /></svg></Plain>
          </PageKeys>
        </ScrollCol>
      </Work>

      <StatusBar>
        <StatusItem $w={105}>Страница: 1 из 1</StatusItem>
        <StatusItem $w={101}>Число слов: 164</StatusItem>
        <StatusItem $w={136}><ProofIcon />Русский (Россия)</StatusItem>
        <StatusItem $w={34} aria-label="Макрос"><MacroIcon /></StatusItem>
        <ViewKeys>
          {[0, 1, 2, 3, 4].map((k) => <Plain key={k} aria-label={`Режим ${k + 1}`}><ViewIcon kind={k} /></Plain>)}
        </ViewKeys>
        <Zoom>
          100%
          <Plain aria-label="Уменьшить"><ZoomKey /></Plain>
          <Slider type="range" min="0" max="100" defaultValue="50" aria-label="Масштаб" />
          <Plain aria-label="Увеличить"><ZoomKey plus /></Plain>
        </Zoom>
      </StatusBar>

      <TaskBar>
        <StartButton aria-label="Пуск"><Start /></StartButton>
        <QuickLaunch>
          <Plain aria-label="Переключение окон"><Switcher /></Plain>
          <Plain aria-label="Рабочий стол"><Desktop /></Plain>
          <Plain aria-label="Internet Explorer"><Explorer /></Plain>
          <Plain aria-label="Media Player"><Media /></Plain>
          <Plain aria-label="Outlook"><Outlook /></Plain>
        </QuickLaunch>
        <Tasks>
          {TASKS.map(([Icon, t], i) => <Task key={i} $on={i === 11}><Icon /><span>{t}</span></Task>)}
        </Tasks>
        <Tray>
          <Lang>RU</Lang>
          <TrayIcons>
            <Plain aria-label="Скрытые значки"><svg width="13" height="9"><path d="M6 1L2 4.500 6 8" fill="none" stroke="#fff" strokeWidth="2" /></svg></Plain>
            <Outlook /><Avatar />
          </TrayIcons>
          <TrayIcons><Network /><Speaker /></TrayIcons>
          <time>20:37</time>
        </Tray>
      </TaskBar>
    </Screen>
  );
}
